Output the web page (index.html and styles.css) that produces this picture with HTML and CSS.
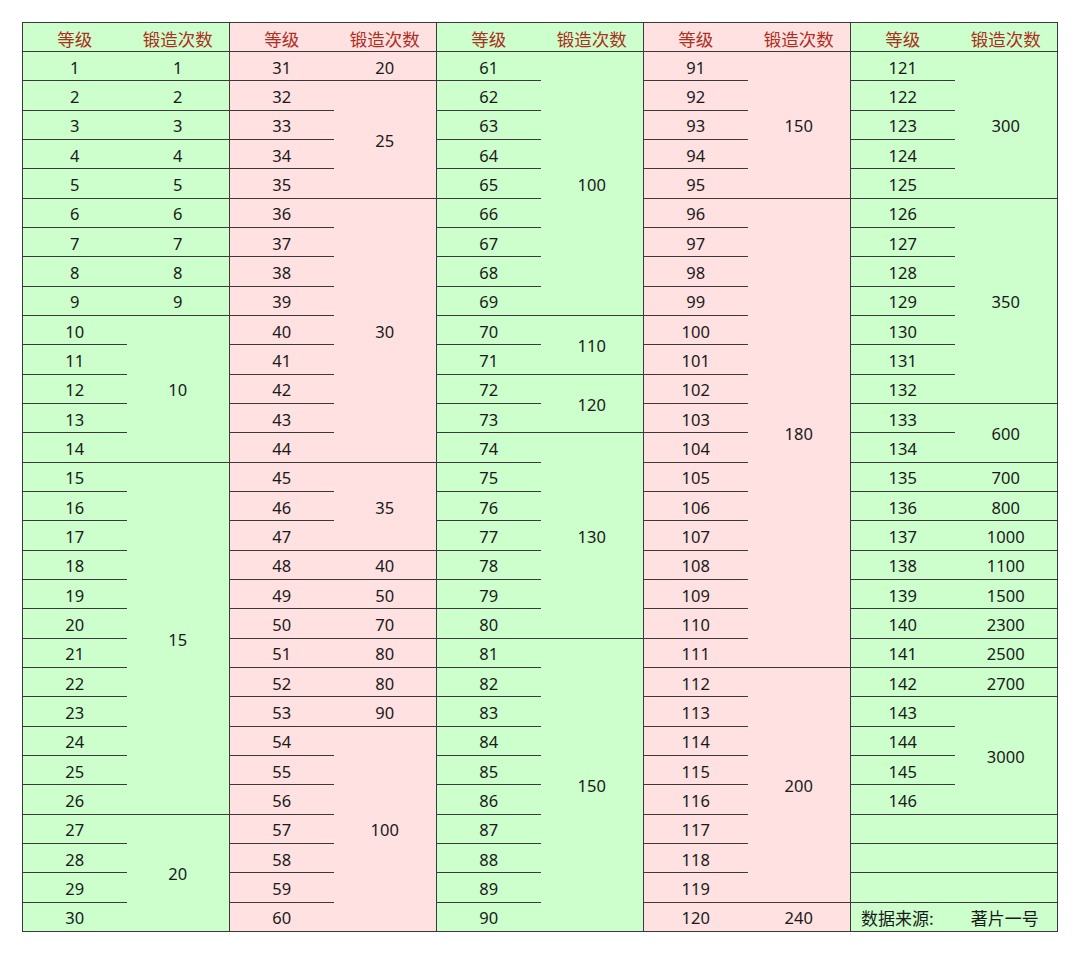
FILE: index.html
```html
<!DOCTYPE html>
<html lang="zh-CN">
<head>
<meta charset="utf-8">
<title>锻造次数</title>
<link rel="stylesheet" href="styles.css">
</head>
<body>
<table class="forge">
<colgroup>
<col class="lv gr"><col class="ct gr">
<col class="lv pk"><col class="ct pk">
<col class="lv gr"><col class="ct gr">
<col class="lv pk"><col class="ct pk">
<col class="lv gr"><col class="ct gr">
</colgroup>
<thead>
<tr>
<th class="l">等级</th><th>锻造次数</th>
<th class="l">等级</th><th>锻造次数</th>
<th class="l">等级</th><th>锻造次数</th>
<th class="l">等级</th><th>锻造次数</th>
<th class="l">等级</th><th>锻造次数</th>
</tr>
</thead>
<tbody>
<tr><td class="l">1</td><td>1</td><td class="l">31</td><td>20</td><td class="l">61</td><td rowspan="9">100</td><td class="l">91</td><td rowspan="5">150</td><td class="l">121</td><td rowspan="5">300</td></tr>
<tr><td class="l">2</td><td>2</td><td class="l">32</td><td rowspan="4">25</td><td class="l">62</td><td class="l">92</td><td class="l">122</td></tr>
<tr><td class="l">3</td><td>3</td><td class="l">33</td><td class="l">63</td><td class="l">93</td><td class="l">123</td></tr>
<tr><td class="l">4</td><td>4</td><td class="l">34</td><td class="l">64</td><td class="l">94</td><td class="l">124</td></tr>
<tr><td class="l">5</td><td>5</td><td class="l">35</td><td class="l">65</td><td class="l">95</td><td class="l">125</td></tr>
<tr><td class="l">6</td><td>6</td><td class="l">36</td><td rowspan="9">30</td><td class="l">66</td><td class="l">96</td><td rowspan="16">180</td><td class="l">126</td><td rowspan="7">350</td></tr>
<tr><td class="l">7</td><td>7</td><td class="l">37</td><td class="l">67</td><td class="l">97</td><td class="l">127</td></tr>
<tr><td class="l">8</td><td>8</td><td class="l">38</td><td class="l">68</td><td class="l">98</td><td class="l">128</td></tr>
<tr><td class="l">9</td><td>9</td><td class="l">39</td><td class="l">69</td><td class="l">99</td><td class="l">129</td></tr>
<tr><td class="l">10</td><td rowspan="5">10</td><td class="l">40</td><td class="l">70</td><td rowspan="2">110</td><td class="l">100</td><td class="l">130</td></tr>
<tr><td class="l">11</td><td class="l">41</td><td class="l">71</td><td class="l">101</td><td class="l">131</td></tr>
<tr><td class="l">12</td><td class="l">42</td><td class="l">72</td><td rowspan="2">120</td><td class="l">102</td><td class="l">132</td></tr>
<tr><td class="l">13</td><td class="l">43</td><td class="l">73</td><td class="l">103</td><td class="l">133</td><td rowspan="2">600</td></tr>
<tr><td class="l">14</td><td class="l">44</td><td class="l">74</td><td rowspan="7">130</td><td class="l">104</td><td class="l">134</td></tr>
<tr><td class="l">15</td><td rowspan="12">15</td><td class="l">45</td><td rowspan="3">35</td><td class="l">75</td><td class="l">105</td><td class="l">135</td><td>700</td></tr>
<tr><td class="l">16</td><td class="l">46</td><td class="l">76</td><td class="l">106</td><td class="l">136</td><td>800</td></tr>
<tr><td class="l">17</td><td class="l">47</td><td class="l">77</td><td class="l">107</td><td class="l">137</td><td>1000</td></tr>
<tr><td class="l">18</td><td class="l">48</td><td>40</td><td class="l">78</td><td class="l">108</td><td class="l">138</td><td>1100</td></tr>
<tr><td class="l">19</td><td class="l">49</td><td>50</td><td class="l">79</td><td class="l">109</td><td class="l">139</td><td>1500</td></tr>
<tr><td class="l">20</td><td class="l">50</td><td>70</td><td class="l">80</td><td class="l">110</td><td class="l">140</td><td>2300</td></tr>
<tr><td class="l">21</td><td class="l">51</td><td>80</td><td class="l">81</td><td rowspan="10">150</td><td class="l">111</td><td class="l">141</td><td>2500</td></tr>
<tr><td class="l">22</td><td class="l">52</td><td>80</td><td class="l">82</td><td class="l">112</td><td rowspan="8">200</td><td class="l">142</td><td>2700</td></tr>
<tr><td class="l">23</td><td class="l">53</td><td>90</td><td class="l">83</td><td class="l">113</td><td class="l">143</td><td rowspan="4">3000</td></tr>
<tr><td class="l">24</td><td class="l">54</td><td rowspan="7">100</td><td class="l">84</td><td class="l">114</td><td class="l">144</td></tr>
<tr><td class="l">25</td><td class="l">55</td><td class="l">85</td><td class="l">115</td><td class="l">145</td></tr>
<tr><td class="l">26</td><td class="l">56</td><td class="l">86</td><td class="l">116</td><td class="l">146</td></tr>
<tr><td class="l">27</td><td rowspan="4">20</td><td class="l">57</td><td class="l">87</td><td class="l">117</td><td class="l" colspan="2"></td></tr>
<tr><td class="l">28</td><td class="l">58</td><td class="l">88</td><td class="l">118</td><td class="l" colspan="2"></td></tr>
<tr><td class="l">29</td><td class="l">59</td><td class="l">89</td><td class="l">119</td><td class="l" colspan="2"></td></tr>
<tr><td class="l">30</td><td class="l">60</td><td class="l">90</td><td class="l">120</td><td>240</td><td class="l src" colspan="2"><span class="src-k">数据来源:</span><span class="src-v">著片一号</span></td></tr>
</tbody>
</table>
</body>
</html>
```

FILE: styles.css
```css
html, body {
  margin: 0;
  padding: 0;
  background: #ffffff;
}

body {
  padding: 22px 0 0 22px;
  font-family: "Noto Sans", "Noto Sans CJK SC", sans-serif;
  color: #1a1a1a;
}

.forge {
  border-collapse: collapse;
  table-layout: fixed;
  width: 1036px;
  height: 910px;
  border: 1px solid #3a3a3a;
}

.forge tr {
  height: 29px;
}

.forge col.lv { width: 104px; }
.forge col.ct { width: 103px; }
.forge col.gr { background: #ccffcc; }
.forge col.pk { background: #ffe1e1; }

.forge th,
.forge td {
  padding: 3px 0 0 0;
  line-height: 20px;
  text-align: center;
  vertical-align: middle;
  border: 0;
  border-bottom: 1px solid #3a3a3a;
  white-space: nowrap;
}

.forge th {
  font-family: "Noto Sans CJK SC", sans-serif;
  font-weight: normal;
  font-size: 17.5px;
  color: #ad2f1f;
}

.forge td {
  font-size: 16.5px;
}

.forge .l {
  border-left: 1px solid #3a3a3a;
}

.forge td.src {
  text-align: left;
  padding-left: 10px;
  font-family: "Noto Sans CJK SC", sans-serif;
  font-size: 17px;
  color: #1a1a1a;
}

.src-v {
  margin-left: 37px;
}
```
